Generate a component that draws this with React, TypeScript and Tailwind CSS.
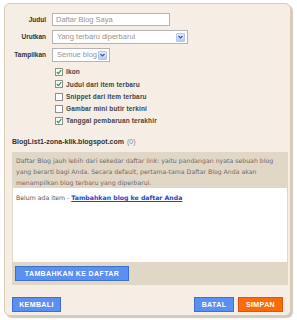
import React from "react";

const font = { fontFamily: '"Liberation Sans", Arial, sans-serif' };
const dv = { fontFamily: '"DejaVu Sans", Verdana, sans-serif' };

function Check({ checked }: { checked: boolean }) {
  return (
    <div className="w-[8px] h-[8px] border border-[#8e8f8f] bg-white flex items-center justify-center shrink-0">
      {checked && (
        <svg width="6" height="6" viewBox="0 0 6 6">
          <path d="M0.8 3 L2.4 4.6 L5.3 1.2" stroke="#2f9a2f" strokeWidth="1.3" fill="none" />
        </svg>
      )}
    </div>
  );
}

function Arrow() {
  return (
    <div className="w-[9px] h-[9px] rounded-[1px] border border-[#b4c6ea] bg-gradient-to-b from-[#e3ebfb] to-[#b9cbef] flex items-center justify-center">
      <svg width="5" height="4" viewBox="0 0 5 4">
        <path d="M0.5 1 L2.5 3 L4.5 1" stroke="#3a55a0" strokeWidth="1.1" fill="none" />
      </svg>
    </div>
  );
}

function Btn({ children, orange, className }: { children: React.ReactNode; orange?: boolean; className?: string }) {
  return (
    <div
      className={
        "h-[15px] flex items-center justify-center text-white font-bold text-[7px] tracking-[0.4px] border " +
        (orange ? "bg-[#fb6a0b] border-[#d9560a] " : "bg-[#5b8ff0] border-[#3f6fd0] ") +
        (className || "")
      }
    >
      {children}
    </div>
  );
}

export default function App() {
  const checks: [string, boolean][] = [
    ["Ikon", true],
    ["Judul dari item terbaru", true],
    ["Snippet dari item terbaru", false],
    ["Gambar mini butir terkini", false],
    ["Tanggal pembaruan terakhir", true],
  ];
  return (
    <div className="w-[297px] h-[320px] bg-white pt-[3px] pl-[4px]" style={font}>
      <div className="w-[287px] h-[313px] rounded-[6px] border border-[#d9ccb7] bg-[#f6eee4] shadow-[2px_2px_1px_rgba(120,100,70,0.35)] flex flex-col">
        <div className="flex flex-col gap-[4px] mt-[9px]">
          <div className="flex items-center h-[13px]">
            <div className="w-[41px] text-right text-[6.5px] font-bold text-[#333] pr-[0px]">Judul</div>
            <div className="ml-[6px] w-[118px] h-[13px] border border-[#b5b5b5] bg-white flex items-center pl-[3px] text-[7.5px] text-[#959595]">
              Daftar Blog Saya
            </div>
          </div>
          <div className="flex items-center h-[14px]">
            <div className="w-[41px] text-right text-[6.5px] font-bold text-[#333]">Urutkan</div>
            <div className="ml-[6px] w-[136px] h-[14px] border border-[#b5b5b5] bg-white flex items-center justify-between pl-[4px] pr-[2px] text-[7.5px] text-[#959595]">
              <span>Yang terbaru diperbarui</span>
              <Arrow />
            </div>
          </div>
          <div className="flex items-center h-[14px]">
            <div className="w-[41px] text-right text-[6.5px] font-bold text-[#333]">Tampilkan</div>
            <div className="ml-[6px] w-[58px] h-[14px] border border-[#b5b5b5] bg-white flex items-center justify-between pl-[4px] pr-[2px] text-[7.5px] text-[#959595]">
              <span>Semue blog</span>
              <Arrow />
            </div>
          </div>
        </div>
        <div className="flex flex-col mt-[4px] ml-[50px]">
          {checks.map(([l, c]) => (
            <div key={l} className="flex items-center h-[12.3px] gap-[3px]">
              <Check checked={c} />
              <span className="text-[6.5px] font-bold text-[#444] tracking-[0.15px]">{l}</span>
            </div>
          ))}
        </div>
        <div className="mt-[10px] ml-[7px] text-[7px] h-[10px] flex items-center">
          <span className="font-bold text-[#333]">BlogList1-zona-klik.blogspot.com</span>
          <span className="text-[#888] ml-[3px]">(0)</span>
        </div>
        <div className="mt-[5px] ml-[7px] w-[276px] bg-[#e1d7c7] flex flex-col" style={dv}>
          <div className="px-[4px] pt-[3px] pb-0 text-[6.2px] leading-[11px] text-[#6a6a6a]">
            Daftar Blog jauh lebih dari sekedar daftar link: yaitu pandangan nyata sebuah blog yang berarti bagi Anda. Secara default, pertama-tama Daftar Blog Anda akan menampilkan blog terbaru yang diperbarui.
          </div>
          <div className="mx-[1px] h-[74px] bg-white px-[3px] pt-[5px] text-[6.2px] text-[#555]">
            Belum ada item - <span className="font-bold text-[#1f47b8] underline">Tambahkan blog ke daftar Anda</span>
          </div>
          <div className="px-[3px] pt-[4px] pb-[4px]" style={font}>
            <Btn className="w-[114px]">TAMBAHKAN KE DAFTAR</Btn>
          </div>
        </div>
        <div className="mt-[12px] mx-[7px] flex items-center">
          <Btn className="w-[49px]">KEMBALI</Btn>
          <div className="flex-1" />
          <Btn className="w-[40px]">BATAL</Btn>
          <Btn orange className="w-[45px] ml-[4px]">SIMPAN</Btn>
        </div>
      </div>
    </div>
  );
}
